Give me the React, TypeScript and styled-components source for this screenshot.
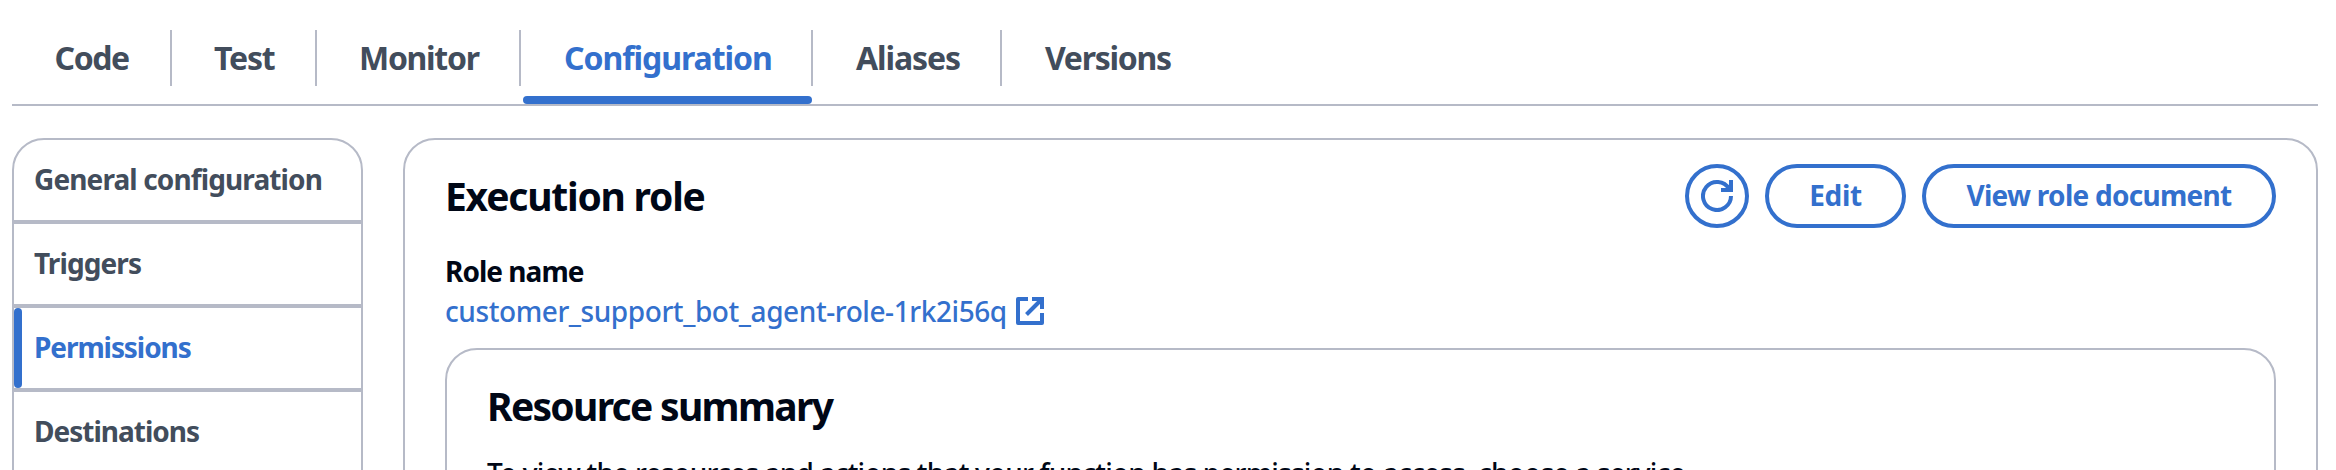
import React from 'react';
import styled, { createGlobalStyle } from 'styled-components';

const BLUE = '#3370cd';
const BORDER = '#b6bac7';
const MUTED = '#424d5c';
const INK = '#000716';

const GlobalStyle = createGlobalStyle`
  *, *::before, *::after { box-sizing: border-box; }
  html, body { margin: 0; background: #fff; }
  body {
    height: 470px;
    overflow: hidden;
    font-family: "Noto Sans", "Open Sans", sans-serif;
    color: ${INK};
  }
  h2, h3, p, ul { margin: 0; padding: 0; }
`;

const Page = styled.div`
  width: 2336px;
  height: 470px;
  padding: 30px 18px 0 12px;
  overflow: hidden;
`;

const TabBar = styled.nav`
  display: flex;
  height: 76px;
  border-bottom: 2px solid ${BORDER};
`;

const Tab = styled.div<{ $width: number; $inset: number; $active?: boolean; $last?: boolean }>`
  position: relative;
  width: ${(p) => p.$width}px;
  height: 56px;
  padding-left: ${(p) => p.$inset}px;
  border-right: ${(p) => (p.$last ? 'none' : `2px solid ${BORDER}`)};
  color: ${(p) => (p.$active ? BLUE : MUTED)};
  font-size: 32px;
  font-weight: 700;
  line-height: 56px;
  white-space: nowrap;
`;

const ActiveLine = styled.span`
  position: absolute;
  left: 2px;
  right: -1px;
  top: 66px;
  height: 8px;
  border-radius: 4px;
  background: ${BLUE};
`;

const Tracked = styled.span<{ $tracking: number }>`
  letter-spacing: ${(p) => p.$tracking}px;
`;

const Columns = styled.div`
  display: grid;
  grid-template-columns: 351px 1fr;
  column-gap: 40px;
  padding-top: 32px;
`;

const SideNav = styled.ul`
  height: 420px;
  border: 2px solid ${BORDER};
  border-radius: 32px 32px 0 0;
  list-style: none;
`;

const SideItem = styled.li<{ $active?: boolean }>`
  position: relative;
  height: 84px;
  padding: 0 0 2px 20px;
  border-bottom: 4px solid ${BORDER};
  color: ${(p) => (p.$active ? BLUE : MUTED)};
  font-size: 28px;
  font-weight: 700;
  line-height: 78px;
  white-space: nowrap;
`;

const ActiveBar = styled.span`
  position: absolute;
  left: 0;
  top: 0;
  width: 8px;
  height: 80px;
  border-radius: 4px;
  background: ${BLUE};
`;

const Panel = styled.section`
  height: 420px;
  padding: 24px 40px 0;
  border: 2px solid ${BORDER};
  border-radius: 32px 32px 0 0;
`;

const PanelHeader = styled.header`
  display: flex;
  align-items: center;
  justify-content: space-between;
  height: 64px;
`;

const PanelTitle = styled.h2`
  font-size: 39px;
  font-weight: 700;
  line-height: 64px;
  white-space: nowrap;
`;

const Actions = styled.div`
  display: flex;
  gap: 16px;
`;

const Button = styled.button<{ $width: number }>`
  display: flex;
  align-items: center;
  justify-content: center;
  width: ${(p) => p.$width}px;
  height: 64px;
  padding: 0;
  border: 4px solid ${BLUE};
  border-radius: 32px;
  background: transparent;
  color: ${BLUE};
  font: 700 28px/54px "Noto Sans", "Open Sans", sans-serif;
  white-space: nowrap;
`;

const ButtonLabel = styled(Tracked)`
  padding-bottom: 2px;
`;

const FieldLabel = styled.div`
  margin-top: 23px;
  font-size: 28px;
  font-weight: 700;
  line-height: 40px;
`;

const RoleLink = styled.a`
  display: flex;
  align-items: center;
  gap: 9px;
  height: 40px;
  color: ${BLUE};
  font-size: 28px;
  font-weight: 500;
  line-height: 40px;
  white-space: nowrap;
`;

const Summary = styled.section`
  height: 300px;
  margin-top: 17px;
  padding: 32px 40px 0;
  border: 2px solid ${BORDER};
  border-radius: 32px 32px 0 0;
`;

const SummaryTitle = styled.h3`
  font-size: 39px;
  font-weight: 700;
  line-height: 48px;
`;

const SummaryText = styled.p`
  margin-top: 23px;
  font-size: 28px;
  font-weight: 500;
  line-height: 40px;
  white-space: nowrap;
`;

const tabs = [
  { label: 'Code', width: 160, inset: 42.5, tracking: -1.4 },
  { label: 'Test', width: 145, inset: 42, tracking: -1.2 },
  { label: 'Monitor', width: 204, inset: 42, tracking: -1.3 },
  { label: 'Configuration', width: 292, inset: 43, tracking: -1.05, active: true },
  { label: 'Aliases', width: 189, inset: 43, tracking: -1.1 },
  { label: 'Versions', width: 210, inset: 43, tracking: -1.3 },
];

const sections = [
  { label: 'General configuration', tracking: -0.88 },
  { label: 'Triggers', tracking: -0.9 },
  { label: 'Permissions', tracking: -1.08, active: true },
  { label: 'Destinations', tracking: -1 },
];

const RefreshIcon = () => (
  <svg width="32" height="32" viewBox="0 0 32 32" fill="none" stroke="currentColor" strokeWidth="4">
    <path d="M30 16A14 14 0 1 1 28.1 9" />
    <path d="M20 10H30V0" />
  </svg>
);

const ExternalIcon = () => (
  <svg width="28" height="28" viewBox="0 0 28 28" fill="none" stroke="currentColor" strokeWidth="4">
    <path d="M12 2H2V26H26V16" strokeLinejoin="round" />
    <path d="M16 2H26V12" />
    <path d="M26 2L10.5 17.5" />
  </svg>
);

export default function App() {
  return (
    <Page>
      <GlobalStyle />
      <TabBar>
        {tabs.map((t, i) => (
          <Tab
            key={t.label}
            $width={t.width}
            $inset={t.inset}
            $active={t.active}
            $last={i === tabs.length - 1}
          >
            <Tracked $tracking={t.tracking}>{t.label}</Tracked>
            {t.active && <ActiveLine />}
          </Tab>
        ))}
      </TabBar>
      <Columns>
        <SideNav>
          {sections.map((s) => (
            <SideItem key={s.label} $active={s.active}>
              {s.active && <ActiveBar />}
              <Tracked $tracking={s.tracking}>{s.label}</Tracked>
            </SideItem>
          ))}
        </SideNav>
        <Panel>
          <PanelHeader>
            <PanelTitle>
              <Tracked $tracking={-1.22}>Execution role</Tracked>
            </PanelTitle>
            <Actions>
              <Button $width={64} aria-label="Refresh">
                <RefreshIcon />
              </Button>
              <Button $width={141}>
                <ButtonLabel $tracking={-0.4}>Edit</ButtonLabel>
              </Button>
              <Button $width={354}>
                <ButtonLabel $tracking={-0.72}>View role document</ButtonLabel>
              </Button>
            </Actions>
          </PanelHeader>
          <FieldLabel>
            <Tracked $tracking={-0.97}>Role name</Tracked>
          </FieldLabel>
          <RoleLink>
            <Tracked $tracking={-0.42}>customer_support_bot_agent-role-1rk2i56q</Tracked>
            <ExternalIcon />
          </RoleLink>
          <Summary>
            <SummaryTitle>
              <Tracked $tracking={-1.7}>Resource summary</Tracked>
            </SummaryTitle>
            <SummaryText>
              <Tracked $tracking={-0.8}>
                To view the resources and actions that your function has permission to access, choose a service.
              </Tracked>
            </SummaryText>
          </Summary>
        </Panel>
      </Columns>
    </Page>
  );
}
